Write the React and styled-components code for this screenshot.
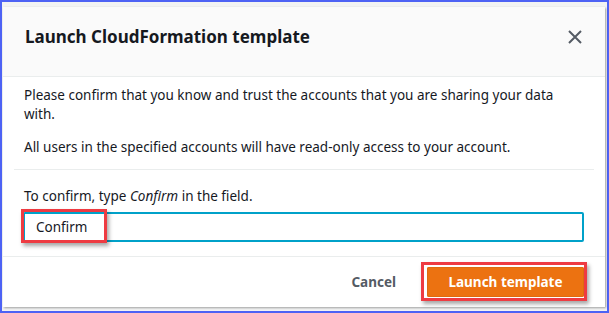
import styled, { createGlobalStyle } from "styled-components";

const GlobalStyle = createGlobalStyle`
  body {
    margin: 0;
    font-family: "Noto Sans", "Open Sans", sans-serif;
    color: #16191f;
  }
`;

export default function App() {
  return (
    <>
      <GlobalStyle />
      <Frame>
        <Dialog>
          <Header>
            <Title>Launch CloudFormation template</Title>
            <CloseButton aria-label="Close">
              <svg width="16" height="16" viewBox="0 0 16 16">
                <path d="M2 2 L14 14 M14 2 L2 14" stroke="#545b64" strokeWidth="2" fill="none" />
              </svg>
            </CloseButton>
          </Header>
          <Body>
            <Text>
              Please confirm that you know and trust the accounts that you are sharing your data
              with.
            </Text>
            <Text $gap={14}>
              All users in the specified accounts will have read-only access to your account.
            </Text>
            <Divider />
            <Label>
              To confirm, type <em>Confirm</em> in the field.
            </Label>
            <Field>
              <Input defaultValue="Confirm" />
              <Highlight $top={-3} $left={-2} $width={86} $height={34} />
            </Field>
          </Body>
          <Footer>
            <CancelButton>Cancel</CancelButton>
            <ButtonWrap>
              <PrimaryButton>Launch template</PrimaryButton>
              <Highlight $top={-5} $left={-6} $width={166} $height={39} />
            </ButtonWrap>
          </Footer>
        </Dialog>
      </Frame>
    </>
  );
}

const Frame = styled.div`
  width: 609px;
  height: 313px;
  box-sizing: border-box;
  border: 2px solid #4d62f4;
  background: #f2f3f3;
  padding: 5px 2px 0 1px;
`;

const Dialog = styled.div`
  height: 300px;
  background: #ffffff;
  box-shadow: 1px 1px 2px rgba(0, 0, 0, 0.35);
  display: flex;
  flex-direction: column;
`;

const Header = styled.div`
  height: 70px;
  box-sizing: border-box;
  display: flex;
  align-items: center;
  justify-content: space-between;
  padding: 0 22px 10px 22px;
  background: #fafafa;
  border-bottom: 1px solid #eaeded;
  flex-shrink: 0;
`;

const Title = styled.h2`
  margin: 0;
  font-size: 17px;
  line-height: 22px;
  font-weight: 700;
  color: #16191f;
`;

const CloseButton = styled.button`
  border: none;
  background: none;
  padding: 0;
  width: 16px;
  height: 16px;
  display: flex;
`;

const Body = styled.div`
  padding: 9px 11px 14px;
  border-bottom: 1px solid #eaeded;
`;

const Text = styled.p`
  margin: ${(p) => p.$gap || 0}px 10px 0;
  font-size: 13.5px;
  line-height: 19px;
`;

const Divider = styled.div`
  height: 1px;
  background: #eaeded;
  margin-top: 12px;
`;

const Label = styled.div`
  margin: 17px 10px 6px;
  font-size: 13.5px;
  line-height: 19px;
`;

const Field = styled.div`
  position: relative;
  margin: 0 10px 0 9px;
`;

const Input = styled.input`
  display: block;
  width: 100%;
  box-sizing: border-box;
  height: 30px;
  border: 2px solid #00a1c9;
  border-radius: 2px;
  padding: 0 11px;
  font-family: inherit;
  font-size: 13.5px;
  color: #16191f;
  outline: none;
`;

const Highlight = styled.div`
  position: absolute;
  top: ${(p) => p.$top}px;
  left: ${(p) => p.$left}px;
  width: ${(p) => p.$width}px;
  height: ${(p) => p.$height}px;
  box-sizing: border-box;
  border: 3px solid #ee3b42;
  box-shadow: 2px 3px 4px rgba(0, 0, 0, 0.35);
  pointer-events: none;
`;

const Footer = styled.div`
  flex: 1;
  display: flex;
  align-items: center;
  justify-content: flex-end;
  gap: 31px;
  padding: 0 21px 0 0;
`;

const CancelButton = styled.button`
  border: none;
  background: none;
  padding: 0;
  font-family: inherit;
  font-size: 13.5px;
  font-weight: 700;
  color: #545b64;
`;

const ButtonWrap = styled.div`
  position: relative;
  display: flex;
`;

const PrimaryButton = styled.button`
  width: 157px;
  height: 30px;
  border: none;
  border-radius: 2px;
  background: #ec7211;
  color: #ffffff;
  font-family: inherit;
  font-size: 13.5px;
  font-weight: 700;
  box-shadow: inset 0 0 0 1px #dd6b10;
`;
